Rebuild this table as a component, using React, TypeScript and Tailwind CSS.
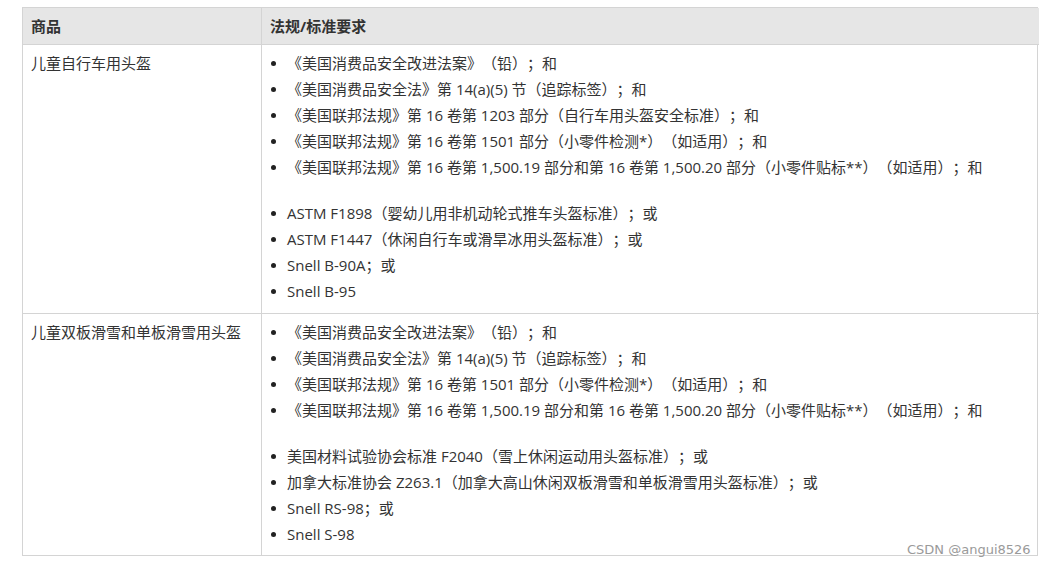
const rows = [
  {
    name: "儿童自行车用头盔",
    groups: [
      [
        "《美国消费品安全改进法案》（铅）；和",
        "《美国消费品安全法》第 14(a)(5) 节（追踪标签）；和",
        "《美国联邦法规》第 16 卷第 1203 部分（自行车用头盔安全标准）；和",
        "《美国联邦法规》第 16 卷第 1501 部分（小零件检测*）（如适用）；和",
        "《美国联邦法规》第 16 卷第 1,500.19 部分和第 16 卷第 1,500.20 部分（小零件贴标**）（如适用）；和",
      ],
      [
        "ASTM F1898（婴幼儿用非机动轮式推车头盔标准）；或",
        "ASTM F1447（休闲自行车或滑旱冰用头盔标准）；或",
        "Snell B-90A；或",
        "Snell B-95",
      ],
    ],
  },
  {
    name: "儿童双板滑雪和单板滑雪用头盔",
    groups: [
      [
        "《美国消费品安全改进法案》（铅）；和",
        "《美国消费品安全法》第 14(a)(5) 节（追踪标签）；和",
        "《美国联邦法规》第 16 卷第 1501 部分（小零件检测*）（如适用）；和",
        "《美国联邦法规》第 16 卷第 1,500.19 部分和第 16 卷第 1,500.20 部分（小零件贴标**）（如适用）；和",
      ],
      [
        "美国材料试验协会标准 F2040（雪上休闲运动用头盔标准）；或",
        "加拿大标准协会 Z263.1（加拿大高山休闲双板滑雪和单板滑雪用头盔标准）；或",
        "Snell RS-98；或",
        "Snell S-98",
      ],
    ],
  },
];

function Bullets({ items }: { items: string[] }) {
  return (
    <ul>
      {items.map((t) => (
        <li key={t} className="flex h-[26px] items-center">
          <span className="ml-[9px] mr-[11px] size-[5px] rounded-full bg-[#222]" />
          <span className="whitespace-nowrap">{t}</span>
        </li>
      ))}
    </ul>
  );
}

export default function App() {
  return (
    <div
      className="relative h-[566px] w-[1049px] bg-white pl-[22px] pt-[7px] text-[15px] text-[#333] [text-spacing-trim:space-all]"
      style={{ fontFamily: '"Open Sans", "Noto Sans CJK SC", sans-serif' }}
    >
      <div className="grid w-[1016px] grid-cols-[238px_778px] border border-[#d4d4d4]">
        <div className="flex h-[37px] items-center border-b border-[#d4d4d4] bg-[#e6e6e6] pl-[8px] font-bold">
          商品
        </div>
        <div className="flex h-[37px] items-center border-b border-l border-[#d4d4d4] bg-[#e6e6e6] pl-[8px] font-bold">
          法规/标准要求
        </div>
        {rows.map((r, i) => (
          <div key={r.name} className="contents">
            <div
              className={`pl-[8px] pt-[5px] leading-[26px] ${i === 0 ? "border-b border-[#d4d4d4]" : ""}`}
            >
              {r.name}
            </div>
            <div
              className={`flex flex-col gap-[20px] border-l border-[#d4d4d4] pt-[5px] ${
                i === 0 ? "border-b pb-[9px]" : "pb-[8px]"
              }`}
            >
              {r.groups.map((g, j) => (
                <Bullets key={j} items={g} />
              ))}
            </div>
          </div>
        ))}
      </div>
      <div
        className="absolute left-[907px] top-[540px] text-[13px] text-[#9a9a9a]"
        style={{ fontFamily: '"DejaVu Sans", sans-serif' }}
      >
        CSDN @angui8526
      </div>
    </div>
  );
}
